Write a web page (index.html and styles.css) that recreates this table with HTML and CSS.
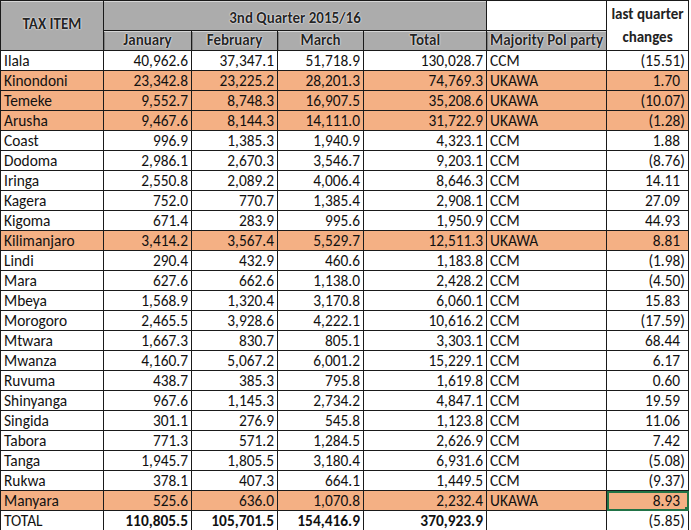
FILE: index.html
```html
<!DOCTYPE html>
<html>
<head>
<meta charset="utf-8">
<link rel="stylesheet" href="styles.css">
</head>
<body>
<table class="sheet">
<colgroup>
<col class="c-name"><col class="c-jan"><col class="c-feb"><col class="c-mar"><col class="c-tot"><col class="c-party"><col class="c-chg">
</colgroup>
<thead>
<tr class="h1">
<th rowspan="2" class="pat tax">TAX ITEM</th>
<th colspan="4" class="pat">3nd Quarter 2015/16</th>
<th class="blank"></th>
<th rowspan="2" class="plain">last quarter<br>changes</th>
</tr>
<tr class="h2">
<th class="pat">January</th>
<th class="pat">February</th>
<th class="pat">March</th>
<th class="pat">Total</th>
<th class="pat">Majority Pol party</th>
</tr>
</thead>
<tbody>
<tr><td>Ilala</td><td class="n">40,962.6</td><td class="n">37,347.1</td><td class="n">51,718.9</td><td class="n">130,028.7</td><td>CCM</td><td class="n">(15.51)</td></tr>
<tr class="hl"><td>Kinondoni</td><td class="n">23,342.8</td><td class="n">23,225.2</td><td class="n">28,201.3</td><td class="n">74,769.3</td><td>UKAWA</td><td class="n pos">1.70</td></tr>
<tr class="hl"><td>Temeke</td><td class="n">9,552.7</td><td class="n">8,748.3</td><td class="n">16,907.5</td><td class="n">35,208.6</td><td>UKAWA</td><td class="n">(10.07)</td></tr>
<tr class="hl"><td>Arusha</td><td class="n">9,467.6</td><td class="n">8,144.3</td><td class="n">14,111.0</td><td class="n">31,722.9</td><td>UKAWA</td><td class="n">(1.28)</td></tr>
<tr><td>Coast</td><td class="n">996.9</td><td class="n">1,385.3</td><td class="n">1,940.9</td><td class="n">4,323.1</td><td>CCM</td><td class="n pos">1.88</td></tr>
<tr><td>Dodoma</td><td class="n">2,986.1</td><td class="n">2,670.3</td><td class="n">3,546.7</td><td class="n">9,203.1</td><td>CCM</td><td class="n">(8.76)</td></tr>
<tr><td>Iringa</td><td class="n">2,550.8</td><td class="n">2,089.2</td><td class="n">4,006.4</td><td class="n">8,646.3</td><td>CCM</td><td class="n pos">14.11</td></tr>
<tr><td>Kagera</td><td class="n">752.0</td><td class="n">770.7</td><td class="n">1,385.4</td><td class="n">2,908.1</td><td>CCM</td><td class="n pos">27.09</td></tr>
<tr><td>Kigoma</td><td class="n">671.4</td><td class="n">283.9</td><td class="n">995.6</td><td class="n">1,950.9</td><td>CCM</td><td class="n pos">44.93</td></tr>
<tr class="hl"><td>Kilimanjaro</td><td class="n">3,414.2</td><td class="n">3,567.4</td><td class="n">5,529.7</td><td class="n">12,511.3</td><td>UKAWA</td><td class="n pos">8.81</td></tr>
<tr><td>Lindi</td><td class="n">290.4</td><td class="n">432.9</td><td class="n">460.6</td><td class="n">1,183.8</td><td>CCM</td><td class="n">(1.98)</td></tr>
<tr><td>Mara</td><td class="n">627.6</td><td class="n">662.6</td><td class="n">1,138.0</td><td class="n">2,428.2</td><td>CCM</td><td class="n">(4.50)</td></tr>
<tr><td>Mbeya</td><td class="n">1,568.9</td><td class="n">1,320.4</td><td class="n">3,170.8</td><td class="n">6,060.1</td><td>CCM</td><td class="n pos">15.83</td></tr>
<tr><td>Morogoro</td><td class="n">2,465.5</td><td class="n">3,928.6</td><td class="n">4,222.1</td><td class="n">10,616.2</td><td>CCM</td><td class="n">(17.59)</td></tr>
<tr><td>Mtwara</td><td class="n">1,667.3</td><td class="n">830.7</td><td class="n">805.1</td><td class="n">3,303.1</td><td>CCM</td><td class="n pos">68.44</td></tr>
<tr><td>Mwanza</td><td class="n">4,160.7</td><td class="n">5,067.2</td><td class="n">6,001.2</td><td class="n">15,229.1</td><td>CCM</td><td class="n pos">6.17</td></tr>
<tr><td>Ruvuma</td><td class="n">438.7</td><td class="n">385.3</td><td class="n">795.8</td><td class="n">1,619.8</td><td>CCM</td><td class="n pos">0.60</td></tr>
<tr><td>Shinyanga</td><td class="n">967.6</td><td class="n">1,145.3</td><td class="n">2,734.2</td><td class="n">4,847.1</td><td>CCM</td><td class="n pos">19.59</td></tr>
<tr><td>Singida</td><td class="n">301.1</td><td class="n">276.9</td><td class="n">545.8</td><td class="n">1,123.8</td><td>CCM</td><td class="n pos">11.06</td></tr>
<tr><td>Tabora</td><td class="n">771.3</td><td class="n">571.2</td><td class="n">1,284.5</td><td class="n">2,626.9</td><td>CCM</td><td class="n pos">7.42</td></tr>
<tr><td>Tanga</td><td class="n">1,945.7</td><td class="n">1,805.5</td><td class="n">3,180.4</td><td class="n">6,931.6</td><td>CCM</td><td class="n">(5.08)</td></tr>
<tr><td>Rukwa</td><td class="n">378.1</td><td class="n">407.3</td><td class="n">664.1</td><td class="n">1,449.5</td><td>CCM</td><td class="n">(9.37)</td></tr>
<tr class="hl"><td>Manyara</td><td class="n">525.6</td><td class="n">636.0</td><td class="n">1,070.8</td><td class="n">2,232.4</td><td>UKAWA</td><td class="n pos sel">8.93</td></tr>
<tr class="total"><td>TOTAL</td><td class="n b">110,805.5</td><td class="n b">105,701.5</td><td class="n b">154,416.9</td><td class="n b">370,923.9</td><td></td><td class="n">(5.85)</td></tr>
</tbody>
</table>
</body>
</html>
```

FILE: styles.css
```css
html, body {
  margin: 0;
  padding: 0;
  background: #ffffff;
}

.sheet {
  border-collapse: collapse;
  table-layout: fixed;
  width: 689px;
  font-family: "Carlito", "Lato", "Liberation Sans", sans-serif;
  font-size: 15.4px;
  color: #111;
}

.c-name { width: 103px; }
.c-jan { width: 88px; }
.c-feb { width: 86px; }
.c-mar { width: 86px; }
.c-tot { width: 123px; }
.c-party { width: 120px; }
.c-chg { width: 82px; }

.sheet th,
.sheet td {
  border: 1px solid #1a1a1a;
  padding: 0 3px;
  white-space: nowrap;
  overflow: hidden;
}

.sheet td {
  height: 19px;
  line-height: 19px;
}

.h1 th { height: 27px; }
.h2 th { height: 19px; }

.sheet th {
  font-weight: bold;
  font-size: 15px;
  color: #262626;
  line-height: 19px;
}

.sheet th.pat {
  background-color: #d6d6d6;
  background-image:
    repeating-linear-gradient(0deg, #d6d6d6 0px, #d6d6d6 1px, transparent 1px, transparent 2px),
    repeating-linear-gradient(90deg, #2e2e2e 0px, #2e2e2e 1px, #d6d6d6 1px, #d6d6d6 2px);
  vertical-align: bottom;
  text-shadow: 0 0 1px #ffffff, 0 0 2px #ffffff;
}

.h1 th.pat { padding-bottom: 2px; }
.sheet th.tax { vertical-align: middle; }

.blank { background: #ffffff; }

.sheet th.plain {
  background: #ffffff;
  color: #222;
  line-height: 23px;
  vertical-align: middle;
}

.n { text-align: right; }
.sheet td.pos { padding-right: 8px; }
.b { font-weight: bold; }

.hl td { background: #f4b084; }

.sel {
  position: relative;
  outline: 2px solid #217346;
  outline-offset: -2px;
}

.sel::after {
  content: "";
  position: absolute;
  right: -2px;
  bottom: -2px;
  width: 5px;
  height: 5px;
  background: #217346;
}
```
